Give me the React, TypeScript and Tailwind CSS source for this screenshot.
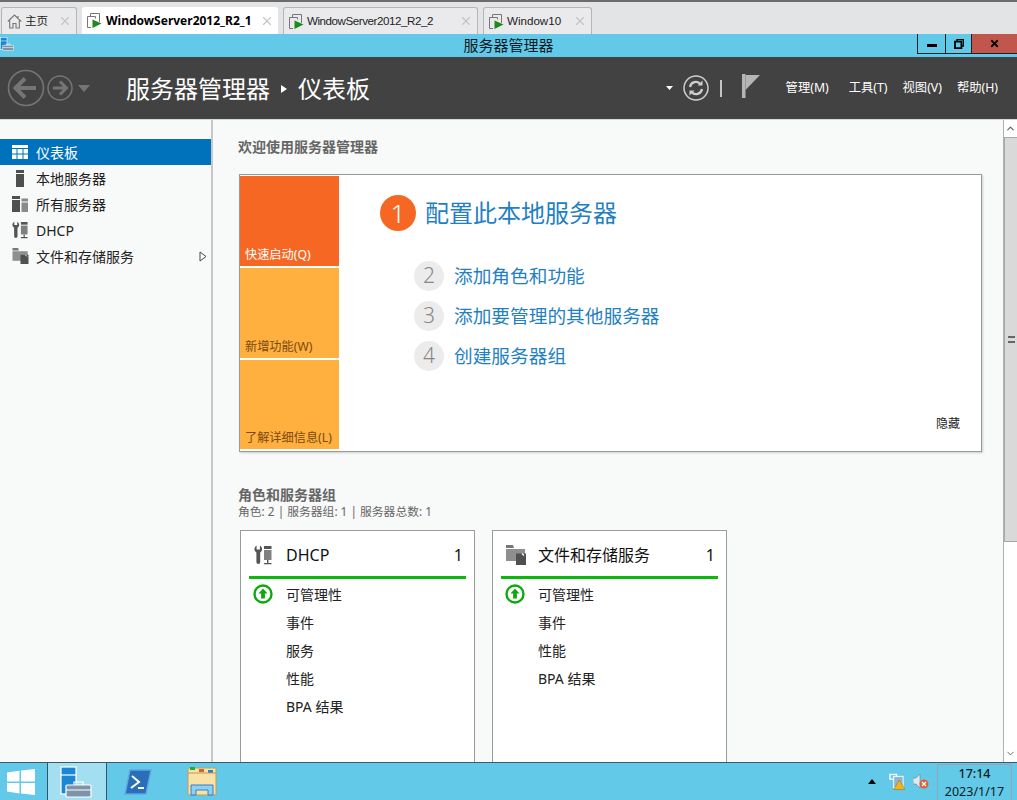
import React from "react";
import { X, ChevronUp, ChevronDown } from "lucide-react";

const FONT = '"Noto Sans", "Noto Sans CJK SC", sans-serif';

const VmIcon = () => (
  <svg width="15" height="15" viewBox="0 0 15 15" className="shrink-0">
    <path d="M3.5 3V.5h9V9" fill="none" stroke="#777" />
    <path d="M.5 3.5h8v2M.5 3.5v11h3.5" fill="none" stroke="#777" />
    <path d="M5.5 6.5l9 4-9 4.5z" fill="#1d8a1d" />
  </svg>
);

const HomeIcon = () => (
  <svg width="15" height="15" viewBox="0 0 15 15" className="shrink-0">
    <path d="M.8 7.5L7.5 1l6.7 6.5M2.7 6.5v7.5h3.3V9.5h3V14h3.3V6.5M11 2v3" fill="none" stroke="#777" strokeWidth="1.1" />
  </svg>
);

const Tab = ({ label, width, active, icon, tight }: { label: string; width: string; active?: boolean; icon?: React.ReactNode; tight?: boolean }) => (
  <div
    className={`flex h-[27px] items-center rounded-t-[3px] pl-[5px] ${width} ${
      active ? "bg-white text-black" : "border border-b-0 border-[#b5b5b5] bg-[#eaeaec] text-[#222]"
    }`}
  >
    {icon ?? <VmIcon />}
    {active ? (
      <span className="ml-[4px] flex-1 whitespace-nowrap text-[12px] font-bold">{label}</span>
    ) : (
      <span className={`ml-[3px] flex-1 whitespace-nowrap text-[11.6px] font-['Liberation_Sans','Noto_Sans_CJK_SC',sans-serif] ${tight ? "tracking-[-0.45px]" : ""}`}>
        {label}
      </span>
    )}
    <X size={14} strokeWidth={2} className="mr-[4px] text-[#c4c4c4]" />
  </div>
);

const ServerManagerIcon = ({ small }: { small?: boolean }) => (
  <svg width={small ? 14 : 32} height={small ? 14 : 32} viewBox="0 0 32 32">
    <rect x="1" y="1" width="15" height="27" fill="#1b87d4" stroke="#fff" strokeWidth="1.2" />
    <path d="M1 9h15" stroke="#fff" strokeWidth="1.2" />
    <rect x="6" y="19" width="25" height="12" rx="1" fill="#7f93a8" stroke="#fff" strokeWidth="1.2" />
    <path d="M14 19v-3h9v3M6 24h25" fill="none" stroke="#fff" strokeWidth="1.2" />
  </svg>
);

const DhcpIcon = ({ color = "#555", size = 18 }: { color?: string; size?: number }) => (
  <svg width={size} height={size + 2} viewBox="0 0 18 20">
    <path d="M2.6.6V4.4H5.9V.6A4 4 0 0 1 6.2 7.6V17a1.9 1.9 0 0 1-3.8 0V7.6A4 4 0 0 1 2.6.6z" fill={color} />
    <rect x="10" y="1" width="7.5" height="3" fill={color} />
    <rect x="10" y="5" width="7.5" height="10" fill={color} opacity="0.75" />
    <path d="M13.7 15v3M10 18.6h7.5" stroke={color} strokeWidth="1.4" />
  </svg>
);

const FilesIcon = ({ w = 17, h = 16 }: { w?: number; h?: number }) => (
  <svg width={w} height={h} viewBox="0 0 20 20">
    <path d="M0 0h7l1 3H0z" fill="#777" />
    <path d="M0 4h19v12H0z" fill="#8f8f8f" />
    <rect x="10" y="8.5" width="10" height="11.5" fill="#505050" />
    <path d="M16 8.5l2 2" stroke="#fff" strokeWidth="1.2" />
  </svg>
);

const SideItem = ({ icon, label, active, arrow }: { icon: React.ReactNode; label: string; active?: boolean; arrow?: boolean }) => (
  <div className={`flex h-[26px] items-center text-[14px] ${active ? "bg-[#0072bc] text-white" : "text-[#222]"}`}>
    <span className="flex w-[36px] shrink-0 justify-center pl-[4px]">{icon}</span>
    <span className="flex-1">{label}</span>
    {arrow && (
      <svg width="8" height="11" viewBox="0 0 8 11" className="mr-[4px]">
        <path d="M1 1l6 4.5L1 10z" fill="#fff" stroke="#444" />
      </svg>
    )}
  </div>
);

const Step = ({ n, label }: { n: number; label: string }) => (
  <div className="flex h-[30px] items-center">
    <span className="flex h-[30px] w-[30px] items-center justify-center rounded-full bg-[#ececec] text-[21px] font-light text-[#888]">
      {n}
    </span>
    <span className="ml-[10px] text-[18.7px] text-[#1f80c4]">{label}</span>
  </div>
);

const Tile = ({ label, height, color, text }: { label: string; height: string; color: string; text: string }) => (
  <div className={`flex items-end px-[5px] text-[12.2px] leading-[22px] ${height} ${color} ${text}`}>{label}</div>
);

const UpIcon = () => (
  <svg width="20" height="20" viewBox="0 0 20 20">
    <circle cx="10" cy="10" r="8.5" fill="#fff" stroke="#0fa80f" strokeWidth="2.4" />
    <path d="M10 4.5l4.5 5h-2.6v5H8.1v-5H5.5z" fill="#0fa80f" />
  </svg>
);

const RoleCard = ({ icon, title, rows }: { icon: React.ReactNode; title: string; rows: string[] }) => (
  <div className="h-[260px] w-[235px] shrink-0 border border-[#9b9b9b] bg-white px-[8px]">
    <div className="flex h-[48px] items-center border-b-[3px] border-[#0bb80b] pl-[5px] pr-[3px] pt-[3px]">
      <span className="flex w-[32px] justify-start">{icon}</span>
      <span className="flex-1 text-[16px] text-[#111]">{title}</span>
      <span className="text-[16px] text-[#111]">1</span>
    </div>
    <div className="pt-[1px]">
      {rows.map((r, i) => (
        <div key={r} className="flex h-[28px] items-center text-[14px] text-[#222]">
          <span className="flex w-[37px] pl-[4px]">{i === 0 && <UpIcon />}</span>
          {r}
        </div>
      ))}
    </div>
  </div>
);

export default function App() {
  return (
    <div className="flex h-[800px] w-[1017px] flex-col overflow-hidden bg-white" style={{ fontFamily: FONT }}>
      {/* vmware tabs */}
      <div className="flex h-[34px] shrink-0 items-end gap-[5px] border-t-2 border-[#6c6c6c] bg-[#e3e4e6] pl-[1px]">
        <Tab label="主页" width="w-[76px]" icon={<HomeIcon />} />
        <Tab label="WindowServer2012_R2_1" width="w-[196px]" active />
        <Tab label="WindowServer2012_R2_2" width="w-[195px]" tight />
        <Tab label="Window10" width="w-[109px]" />
      </div>

      {/* title bar */}
      <div className="grid h-[23px] shrink-0 grid-cols-[1fr_auto_1fr] bg-[#63c9e9]">
        <div className="pt-[3px]">
          <ServerManagerIcon small />
        </div>
        <div className="text-[15px] leading-[22px] text-[#0d1a22]">服务器管理器</div>
        <div className="flex justify-end">
          <div className="flex h-[20px] w-[28px] items-center justify-center border-b border-l border-[#222]">
            <span className="mt-[4px] h-[3px] w-[10px] bg-black" />
          </div>
          <div className="flex h-[20px] w-[26px] items-center justify-center border-b border-l border-[#222]">
            <svg width="10" height="10" viewBox="0 0 10 10">
              <path d="M3 2V.7h6.3V7H8" fill="none" stroke="#000" strokeWidth="1.3" />
              <rect x="1" y="2.6" width="6.4" height="6.6" fill="none" stroke="#000" strokeWidth="1.8" />
            </svg>
          </div>
          <div className="flex h-[20px] w-[46px] items-center justify-center border-b border-l border-[#222] bg-[#c1574c]">
            <X size={11} strokeWidth={4} className="text-black" />
          </div>
        </div>
      </div>

      {/* header */}
      <div className="flex h-[63px] shrink-0 items-center border-b border-[#d8d8d8] bg-[#424242] pr-[19px]">
        <div className="ml-[7px] flex items-center gap-[2px]">
          <svg width="38" height="38" viewBox="0 0 38 38">
            <circle cx="19" cy="19" r="17.5" fill="none" stroke="#757575" strokeWidth="1.6" />
            <path d="M9 19h20M18 9.5L8.5 19l9.5 9.5" fill="none" stroke="#757575" strokeWidth="4" />
          </svg>
          <svg width="26" height="26" viewBox="0 0 26 26">
            <circle cx="13" cy="13" r="12" fill="none" stroke="#757575" strokeWidth="1.5" />
            <path d="M6 13h13M13 6.5l6.5 6.5-6.5 6.5" fill="none" stroke="#757575" strokeWidth="3" />
          </svg>
          <svg width="12" height="7" viewBox="0 0 12 7" className="ml-[3px]">
            <path d="M0 0h12L6 7z" fill="#757575" />
          </svg>
        </div>
        <div className="ml-[36px] flex flex-1 items-center pt-[1px] text-[24px] text-white">
          <span>服务器管理器</span>
          <svg width="6" height="8" viewBox="0 0 6 8" className="ml-[11px] mr-[11px]">
            <path d="M0 0l6 4-6 4z" fill="#fff" />
          </svg>
          <span>仪表板</span>
        </div>
        <svg width="7" height="4" viewBox="0 0 7 4" className="mr-[10px]">
          <path d="M0 0h7L3.5 4z" fill="#fff" />
        </svg>
        <svg width="26" height="26" viewBox="0 0 26 26">
          <circle cx="13" cy="13" r="12" fill="none" stroke="#cfcfcf" strokeWidth="1.5" />
          <path d="M7 12a6 6 0 0 1 10.5-3M19 14a6 6 0 0 1-10.5 3" fill="none" stroke="#cfcfcf" strokeWidth="2.2" />
          <path d="M19.5 5.5v5h-5zM6.5 20.5v-5h5z" fill="#cfcfcf" />
        </svg>
        <span className="ml-[11px] h-[17px] w-[2px] bg-[#c4c4c4]" />
        <svg width="18" height="24" viewBox="0 0 18 24" className="mb-[4px] ml-[20px]">
          <rect x="0" y="0" width="3.5" height="24" fill="#b5b5b5" />
          <path d="M3.5 1H18L3.5 16z" fill="#b5b5b5" />
        </svg>
        <div className="ml-[26px] flex items-center pt-[1px] text-[12.3px] text-white">
          <span>管理(M)</span>
          <span className="ml-[20px]">工具(T)</span>
          <span className="ml-[15px]">视图(V)</span>
          <span className="ml-[15px]">帮助(H)</span>
        </div>
      </div>

      <div className="flex min-h-0 flex-1">
        {/* sidebar */}
        <div className="w-[213px] shrink-0 border-r-2 border-[#c8c8c8] bg-[#f8f9f9] pt-[19px]">
          <SideItem
            active
            label="仪表板"
            icon={
              <svg width="16" height="14" viewBox="0 0 16 14">
                <path d="M0 0h16v3H0zM0 4h4.5v4.5H0zM5.5 4h5v4.5h-5zM11.5 4H16v4.5h-4.5zM0 9.5h4.5V14H0zM5.5 9.5h5V14h-5zM11.5 9.5H16V14h-4.5z" fill="#fff" />
              </svg>
            }
          />
          <SideItem
            label="本地服务器"
            icon={
              <svg width="8" height="17" viewBox="0 0 8 17">
                <path d="M0 0h8v3H0zM0 4h8v13H0z" fill="#4f4f4f" />
              </svg>
            }
          />
          <SideItem
            label="所有服务器"
            icon={
              <svg width="16" height="16" viewBox="0 0 16 16">
                <path d="M0 0h8v3H0zM0 4h8v12H0z" fill="#4f4f4f" />
                <path d="M9.5 2.5H16v3H9.5zM9.5 6.5H16V16H9.5z" fill="#8a8a8a" />
              </svg>
            }
          />
          <SideItem label="DHCP" icon={<DhcpIcon size={16} />} />
          <SideItem label="文件和存储服务" icon={<FilesIcon />} arrow />
        </div>

        {/* main */}
        <div className="min-w-0 flex-1 overflow-hidden bg-[#f8f9f9] pl-[25px] pr-[21px]">
          <div className="mt-[18px] text-[14px] font-bold leading-[18px] text-[#666]">欢迎使用服务器管理器</div>

          <div className="ml-[1px] mt-[18px] flex h-[278px] border border-[#9a9a9a] bg-white py-[1px] pr-[1px] shadow-[1px_1px_2px_#ccc]">
            <div className="flex w-[99px] shrink-0 flex-col gap-[2px]">
              <Tile label="快速启动(Q)" height="h-[90px]" color="bg-[#f76724]" text="text-white" />
              <Tile label="新增功能(W)" height="h-[90px]" color="bg-[#ffb03f]" text="text-[#7a4a12]" />
              <Tile label="了解详细信息(L)" height="h-[89px]" color="bg-[#ffb03f]" text="text-[#7a4a12]" />
            </div>
            <div className="flex flex-1 flex-col pl-[41px] pr-[20px] pt-[19px]">
              <div className="flex h-[36px] items-center">
                <span className="flex h-[36px] w-[36px] items-center justify-center rounded-full bg-[#f76724] text-[26px] font-light text-white">1</span>
                <span className="ml-[9px] text-[24px] text-[#1f80c4]">配置此本地服务器</span>
              </div>
              <div className="ml-[34px] mt-[30px] flex flex-col gap-[10px]">
                <Step n={2} label="添加角色和功能" />
                <Step n={3} label="添加要管理的其他服务器" />
                <Step n={4} label="创建服务器组" />
              </div>
              <div className="mt-auto pb-[17px] text-right text-[12px] text-[#222]">隐藏</div>
            </div>
          </div>

          <div className="mt-[34px] text-[14px] font-bold leading-[17px] text-[#666]">角色和服务器组</div>
          <div className="text-[11.8px] leading-[16px] text-[#666]">角色: 2 | 服务器组: 1 | 服务器总数: 1</div>

          <div className="ml-[2px] mt-[11px] flex gap-[17px]">
            <RoleCard icon={<DhcpIcon />} title="DHCP" rows={["可管理性", "事件", "服务", "性能", "BPA 结果"]} />
            <RoleCard icon={<FilesIcon w={20} h={20} />} title="文件和存储服务" rows={["可管理性", "事件", "性能", "BPA 结果"]} />
          </div>
        </div>

        {/* scrollbar */}
        <div className="flex w-[14px] shrink-0 flex-col border-l border-[#b0b0b0] bg-white">
          <div className="flex h-[17px] items-center justify-center text-[#606060]">
            <ChevronUp size={11} strokeWidth={2.5} />
          </div>
          <div className="flex h-[405px] items-center justify-center border-y border-l border-[#a8a8a8] bg-[#d9d9d9]">
            <span className="h-[7px] w-[7px] border-y-2 border-[#666]" />
          </div>
          <div className="flex-1" />
          <div className="flex h-[17px] items-center justify-center text-[#606060]">
            <ChevronDown size={11} strokeWidth={2} />
          </div>
        </div>
      </div>

      {/* taskbar */}
      <div className="flex h-[38px] shrink-0 items-center border-t border-[#3a5a6a] bg-[#63c9e9]">
        <div className="flex h-full w-[47px] items-center justify-center pr-[5px]">
          <svg width="28" height="26" viewBox="0 0 28 26">
            <path d="M0 3.5l12.5-1.8V12.5H0zM14 1.5L28 0v12.5H14zM0 14h12.5v10.5L0 22.5zM14 14h14v12l-14-1.5z" fill="#fff" />
          </svg>
        </div>
        <div className="flex h-full w-[60px] items-center justify-center border-x border-[#33556a] bg-[#a3dff1] pr-[2px]">
          <ServerManagerIcon />
        </div>
        <div className="flex h-full w-[70px] items-center justify-center pr-[8px]">
          <svg width="28" height="26" viewBox="0 0 28 26">
            <path d="M6 1h21l-5 24H1z" fill="#2a6db8" stroke="#5fa8e0" strokeWidth="1.4" />
            <path d="M8 7l7 6-8 6M14 19h6" fill="none" stroke="#fff" strokeWidth="2" />
          </svg>
        </div>
        <div className="flex h-full w-[50px] items-center justify-center">
          <svg width="32" height="29" viewBox="0 0 32 29">
            <rect x="2" y="1" width="28" height="27" rx="1" fill="#f8e2a6" stroke="#c49a54" />
            <rect x="4" y="0" width="5" height="3" fill="#2fa82f" />
            <rect x="13" y="2" width="5" height="3" fill="#d9622b" />
            <rect x="22" y="3" width="5" height="3" fill="#2f7fd0" />
            <path d="M2 6h28" stroke="#c49a54" />
            <path d="M5 28V18h22v10h-5v-5H10v5z" fill="#8fd0ee" stroke="#2f7fd0" />
          </svg>
        </div>
        <div className="flex-1" />
        <svg width="8" height="5" viewBox="0 0 8 5" className="mr-[13px]">
          <path d="M4 0l4 5H0z" fill="#000" />
        </svg>
        <svg width="16" height="17" viewBox="0 0 17 17" className="mr-[8px]">
          <rect x="1" y="1" width="7" height="5" fill="none" stroke="#fff" strokeWidth="1.4" />
          <rect x="5" y="3" width="10" height="12" fill="#8fb6cc" stroke="#fff" />
          <path d="M11 7l6 10H5z" fill="#f5b21e" stroke="#8a6a10" strokeWidth="0.5" />
        </svg>
        <svg width="16" height="15" viewBox="0 0 16 15" className="mr-[8px]">
          <path d="M0 4h3l4-4v14l-4-4H0z" fill="#dfe8ee" stroke="#6a7f8c" strokeWidth="0.6" />
          <circle cx="11" cy="10" r="4.5" fill="#e0603a" />
          <path d="M9 8l4 4M13 8l-4 4" stroke="#fff" strokeWidth="1.2" />
        </svg>
        <div className="mr-[5px] flex h-[36px] w-[75px] flex-col items-center justify-center self-end border-x border-t border-[#8fa8b4] text-[12.5px] leading-[18px] text-[#0d1a22]">
          <span className="font-medium">17:14</span>
          <span>2023/1/17</span>
        </div>
      </div>
    </div>
  );
}
